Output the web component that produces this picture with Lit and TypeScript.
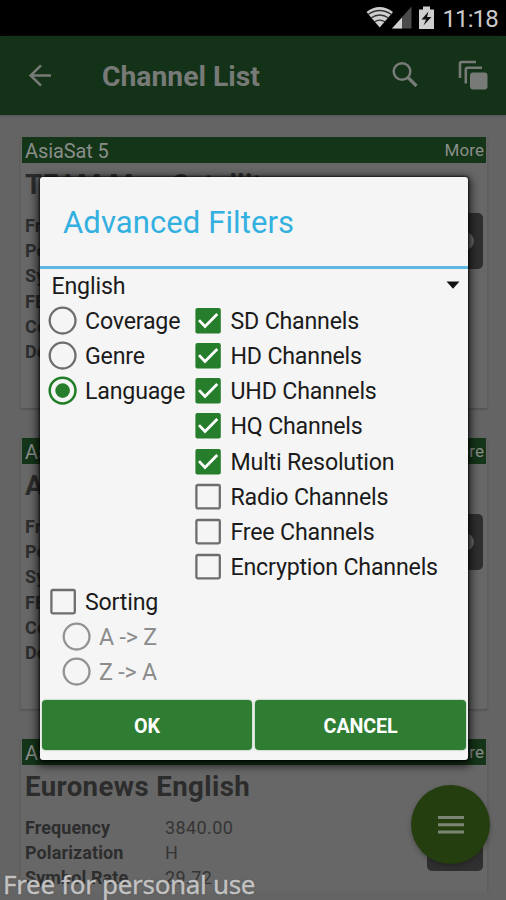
import { LitElement, html, css, svg } from "lit";
import { customElement, property } from "lit/decorators.js";
import { classMap } from "lit/directives/class-map.js";

@customElement("channel-card")
class ChannelCard extends LitElement {
  @property() name = "";
  @property() freq = "3840.00";
  @property({ type: Boolean }) short = false;

  static styles = css`
    :host { display: block; width: 464px; height: 270px; background: #676767; border: 1px solid #5f5f5f; border-top: 0;
      border-bottom-color: #545454; padding: 0 1px 1px; border-radius: 3px; box-shadow: 0 1px 2px #50505088; position: relative; }
    .bar { height: 26px; background: #143518; color: #8a8e8a; display: flex; justify-content: space-between; align-items: center; padding: 0 2px 0 3px; }
    .sat { font-size: 20px; line-height: 26px; padding-top: 2px; letter-spacing: -0.1px; }
    .more { font-size: 17px; line-height: 24px; letter-spacing: 0.1px; }
    .title { font-size: 27.6px; line-height: 32px; font-weight: 700; color: #2c2c2c; margin: 6px 0 0 3px; white-space: nowrap; letter-spacing: 0.4px; }
    .rows { margin: 12px 0 0 3px; }
    .row { display: grid; grid-template-columns: 140px 1fr; height: 25.2px; line-height: 25.2px; font-size: 18px; color: #353535; letter-spacing: 0.1px; }
    .row b { color: #2d2d2d; font-weight: 700; }
    .row span { letter-spacing: 0.4px; }
    .tile { position: absolute; right: 4px; top: 76px; width: 56px; height: 56px; border-radius: 5px; background: #2f2f2f;
      display: flex; align-items: center; justify-content: center; }
    .knob { width: 38px; height: 18px; border-radius: 9px; background: #686868; }
  `;

  render() {
    const all = [["Frequency", this.freq], ["Polarization", "H"], ["Symbol Rate", "29.72"], ["FEC", "5/6"], ["Country", ""], ["Details", ""]];
    const rows = this.short ? all.slice(0, 3) : all;
    return html`
      <div class="bar"><span class="sat">AsiaSat 5</span><span class="more">More</span></div>
      <div class="title">${this.name}</div>
      <div class="rows">${rows.map(([k, v]) => html`<div class="row"><b>${k}</b><span>${v}</span></div>`)}</div>
      <div class="tile"><div class="knob"></div></div>`;
  }
}

@customElement("filter-option")
class FilterOption extends LitElement {
  @property() kind = "check";
  @property() label = "";
  @property({ type: Boolean }) on = false;
  @property({ type: Boolean }) muted = false;

  static styles = css`
    :host { display: flex; align-items: center; height: 35.15px; font-size: 23.2px; letter-spacing: -0.2px; color: #1b1b1b; white-space: nowrap; }
    svg { width: 30px; height: 30px; margin-right: 7.5px; flex: none; }
    .line { fill: none; stroke: #6d6d6d; stroke-width: 2.3; }
    .green { fill: none; stroke: #1f7d26; stroke-width: 2.5; }
    .fill { fill: #267d2b; }
    .tick { fill: none; stroke: #fff; stroke-width: 2.8; }
    .muted .line { stroke: #929292; }
    .muted { color: #8c8c8c; }
    .opt { display: flex; align-items: center; }
  `;

  render() {
    const mark = this.kind === "radio"
      ? svg`<circle class=${this.on ? "green" : "line"} cx="14.6" cy="14.6" r="12.9"/>${this.on ? svg`<circle class="fill" cx="14.6" cy="14.6" r="7.3"/>` : ""}`
      : this.on
        ? svg`<rect class="fill" x="2.4" y="2" width="25.4" height="25.4" rx="2"/><path class="tick" d="M6 14.1 L12 20.4 L24.3 7.9"/>`
        : svg`<rect class="line" x="3.4" y="3" width="23.4" height="23.4" rx="1.3"/>`;
    return html`<div class=${classMap({ opt: true, muted: this.muted })}><svg viewBox="0 0 30 30">${mark}</svg><span>${this.label}</span></div>`;
  }
}

@customElement("app-root")
class AppRoot extends LitElement {
  static styles = css`
    :host { display: block; position: relative; width: 506px; height: 900px; overflow: hidden; background: #646464; font-family: Roboto, sans-serif; }
    .status { height: 36px; background: #000; display: flex; justify-content: flex-end; }
    .status svg { width: 76px; height: 36px; }
    .clock { width: 64px; box-sizing: border-box; padding-left: 0.5px; font-size: 24px; letter-spacing: -0.9px; line-height: 38px; color: #cacaca; }
    .appbar { height: 79px; background: #133217; display: flex; align-items: center; color: #777a77; box-shadow: 0 1px 3px #4448; }
    .back { width: 30px; height: 30px; margin-left: 25px; }
    .heading { margin-left: 47px; font-size: 28.3px; font-weight: 700; flex: 1; padding-top: 2px; }
    .tools { width: 120px; height: 79px; }
    .list { display: flex; flex-direction: column; gap: 29px; padding: 22px 0 0 20px; height: 755px; overflow: hidden; }
    .list channel-card { flex: none; }
    .dialog { position: absolute; left: 39.5px; top: 176.5px; width: 428.5px; height: 583px; background: #f5f5f5; border-radius: 3px;
      box-shadow: 0 3px 8px 3px #000a, 0 0 2px 1px #0009; display: flex; flex-direction: column; }
    .dtitle { height: 89.5px; box-sizing: border-box; padding-left: 23.5px; line-height: 92px; font-size: 31px; letter-spacing: 0.1px; color: #33b0e0; }
    .rule { height: 3px; background: #5fb8e2; }
    .spinner { height: 34.5px; display: flex; align-items: center; justify-content: space-between; padding: 0 8px 0 12px; font-size: 23.2px; letter-spacing: -0.18px; color: #1b1b1b; }
    .spinner svg { width: 14px; height: 8px; margin-top: -2px; }
    .cols { display: grid; grid-template-columns: 145.5px 1fr; padding-left: 8px; }
    .sorting { padding-left: 8px; }
    .sub { padding-left: 14px; }
    .buttons { display: grid; grid-template-columns: 1fr 1fr; gap: 3px; padding: 0 2px; margin-top: 9.5px; }
    .btn { height: 50px; border-radius: 4px; background: #2f7d32; color: #fff; font-weight: 700; font-size: 19.7px; letter-spacing: -0.1px; line-height: 53px; text-align: center; box-shadow: 0 0 2px #2f7d3299; }
    .fab { position: absolute; left: 411px; top: 785px; width: 79px; height: 79px; border-radius: 50%; background: #243e10; box-shadow: 0 2px 5px #0004;
      display: flex; align-items: center; justify-content: center; }
    .fab svg { width: 26px; height: 18px; }
    .mark { position: absolute; left: 3px; top: 865.5px; font-family: "Noto Sans", "Open Sans", sans-serif; font-size: 26px; letter-spacing: -0.32px; line-height: 36px; color: #c2c2c2; white-space: nowrap; -webkit-text-stroke: 0.4px #c2c2c2; text-shadow: 0 0 2px #3339; }
  `;

  render() {
    const checks: [string, boolean][] = [["SD Channels", true], ["HD Channels", true], ["UHD Channels", true], ["HQ Channels", true],
      ["Multi Resolution", true], ["Radio Channels", false], ["Free Channels", false], ["Encryption Channels", false]];
    return html`
      <div class="status">
        <svg viewBox="0 0 76 36">
          <path fill="#cfcfcf" d="M0.5 12 Q13.5 2 27 12 L13.7 27.5Z"/>
          <g fill="none" stroke="#333" stroke-width="1.3"><path d="M2 14.5Q13.7 6.5 25.5 14.5M5 18Q13.7 12 22.5 18M8.5 21.8Q13.7 18.5 19 21.8"/></g>
          <path fill="#4b4b4b" d="M26 28.5 L45.5 6.5 V28.5Z"/><path fill="#d2d2d2" d="M26 28.5 L36 17.5 V28.5Z"/>
          <path fill="#cfcfcf" d="M53 9.5h4v-3h7v3h4v19.5h-15z"/><path fill="#111" d="M62.5 11.5 L55.5 19.5 H60 L57.5 25.5 L65.5 17 H61Z"/>
        </svg>
        <span class="clock">11:18</span>
      </div>
      <div class="appbar">
        <svg class="back" viewBox="0 0 30 30" fill="none" stroke="currentColor" stroke-width="2.5"><path d="M26 14.5H5.5M16 4.3 L5.6 14.5 L16 24.7"/></svg>
        <span class="heading">Channel List</span>
        <svg class="tools" viewBox="386 36 120 79" fill="none" stroke="currentColor">
          <circle cx="402" cy="71.5" r="8.3" stroke-width="2.5"/><path d="M408 77.5L416.5 86" stroke-width="3.2"/>
          <path d="M460 78V63.5Q460 62 461.5 62H476M465.8 83.5V69.5Q465.8 67.7 467.5 67.7H482" stroke-width="2.6"/>
          <rect x="470" y="72.5" width="17.5" height="17" rx="3" fill="currentColor" stroke="none"/>
        </svg>
      </div>
      <div class="list">
        <channel-card name="TEAM Man Satellite"></channel-card>
        <channel-card name="Arirang"></channel-card>
        <channel-card name="Euronews English" short></channel-card>
      </div>
      <div class="fab"><svg viewBox="0 0 26 18" fill="#7c8574"><path d="M0 0h26v3H0zM0 7.2h26v3H0zM0 14.4h26v3H0z"/></svg></div>
      <div class="dialog">
        <div class="dtitle">Advanced Filters</div>
        <div class="rule"></div>
        <div class="spinner"><span>English</span><svg viewBox="0 0 14 8"><path d="M0.5 0.5h13L7 7.8z" fill="#111"/></svg></div>
        <div class="cols">
          <div>
            <filter-option kind="radio" label="Coverage"></filter-option>
            <filter-option kind="radio" label="Genre"></filter-option>
            <filter-option kind="radio" label="Language" on></filter-option>
          </div>
          <div>${checks.map(([l, on]) => html`<filter-option label=${l} ?on=${on}></filter-option>`)}</div>
        </div>
        <div class="sorting">
          <filter-option label="Sorting"></filter-option>
          <div class="sub">
            <filter-option kind="radio" label="A -&gt; Z" muted></filter-option>
            <filter-option kind="radio" label="Z -&gt; A" muted></filter-option>
          </div>
        </div>
        <div class="buttons"><div class="btn">OK</div><div class="btn">CANCEL</div></div>
      </div>
      <div class="mark">Free for personal use</div>`;
  }
}
